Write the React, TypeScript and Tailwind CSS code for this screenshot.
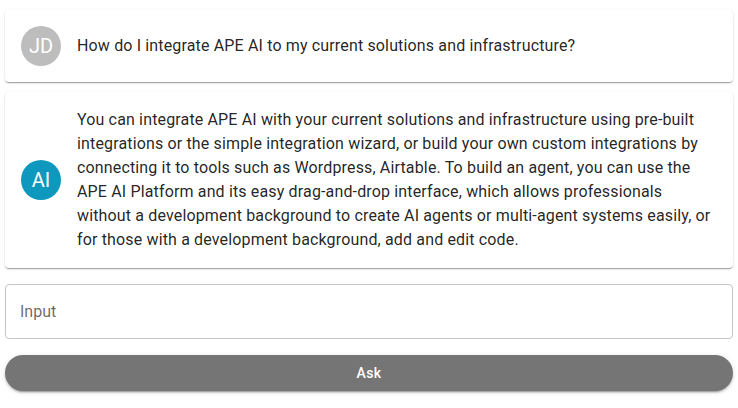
const font = { fontFamily: "Roboto, 'Helvetica Neue', Arial, sans-serif" };

function Avatar({ label, color }: { label: string; color: string }) {
  return (
    <div
      className={`flex h-10 w-10 shrink-0 items-center justify-center rounded-full text-xl text-white ${color}`}
    >
      {label}
    </div>
  );
}

function Message({
  avatar,
  color,
  children,
}: {
  avatar: string;
  color: string;
  children: React.ReactNode;
}) {
  return (
    <div className="flex items-center gap-4 rounded bg-white p-4 shadow-[0_2px_1px_-1px_rgba(0,0,0,0.2),0_1px_1px_0_rgba(0,0,0,0.14),0_1px_3px_0_rgba(0,0,0,0.12)]">
      <Avatar label={avatar} color={color} />
      <p className="text-base leading-6 tracking-[0.00938em] text-[rgba(0,0,0,0.87)]">
        {children}
      </p>
    </div>
  );
}

export default function App() {
  return (
    <main className="flex min-h-screen w-full flex-col bg-white px-[5px] pt-[10px]" style={font}>
      <div className="flex flex-col gap-[10px]">
        <Message avatar="JD" color="bg-[#bdbdbd]">
          How do I integrate APE AI to my current solutions and infrastructure?
        </Message>
        <Message avatar="AI" color="bg-[#0e98bd]">
          You can integrate APE AI with your current solutions and infrastructure using pre-built
          integrations or the simple integration wizard, or build your own custom integrations by
          connecting it to tools such as Wordpress, Airtable. To build an agent, you can use the APE
          AI Platform and its easy drag-and-drop interface, which allows professionals without a
          development background to create AI agents or multi-agent systems easily, or for those
          with a development background, add and edit code.
        </Message>
      </div>
      <div className="mt-4 flex h-[55px] items-center rounded border border-[#c4c4c4] px-[14px]">
        <span className="text-base text-[rgba(0,0,0,0.6)]">Input</span>
      </div>
      <button className="mt-4 h-9 w-full rounded-full bg-[#757575] text-sm font-medium tracking-[0.02857em] text-white shadow-[0_3px_1px_-2px_rgba(0,0,0,0.2),0_2px_2px_0_rgba(0,0,0,0.14),0_1px_5px_0_rgba(0,0,0,0.12)]">
        Ask
      </button>
    </main>
  );
}
